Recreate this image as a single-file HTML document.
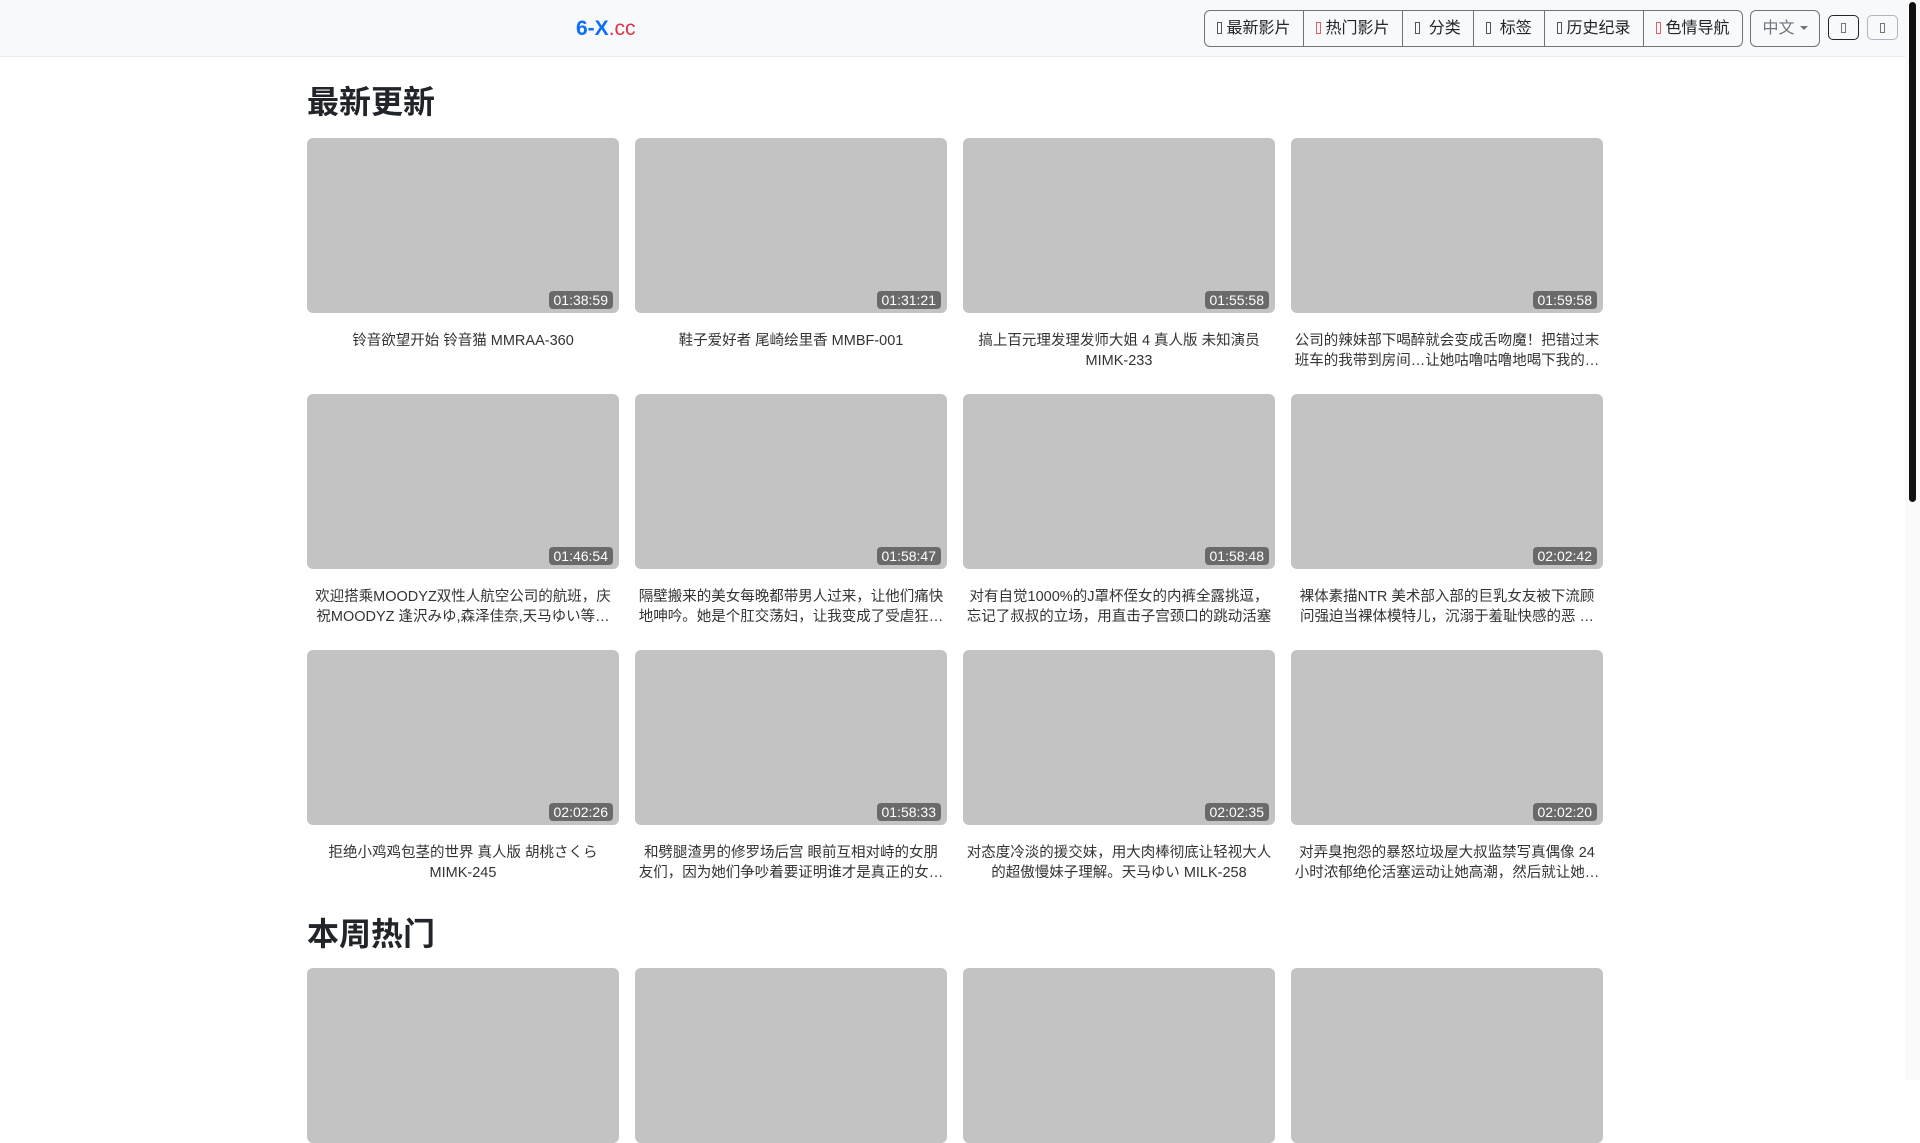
<!DOCTYPE html>
<html><head><meta charset="utf-8"><style>
*{box-sizing:border-box;margin:0;padding:0}
body{width:1920px;height:1080px;overflow:hidden;background:#fff;font-family:"Liberation Sans","Noto Sans CJK SC",sans-serif;color:#212529;position:relative}
.nav{position:absolute;left:0;top:0;width:1905px;height:57px;background:#f8f9fa;border-bottom:1px solid #e9ecef}
.logo{position:absolute;left:576px;top:14px;font-size:21px;line-height:30px}
.logo b{color:#0d6efd}.logo span{color:#dc3545}
.grp{position:absolute;left:1204px;top:10px;height:37px;display:flex;border:1px solid #6c757d;border-radius:6px;overflow:hidden}
.grp div{height:35px;line-height:36px;font-size:16px;color:#212529;border-left:1px solid #6c757d;text-align:center;white-space:nowrap}
.grp div:first-child{border-left:none}
.ic{display:inline-block;width:5px;height:12px;border:1px solid #555;vertical-align:-1px;margin-right:4px}
.ic.r{border-color:#e0606a}
.lang{position:absolute;left:1750px;top:10px;width:70px;height:37px;border:1px solid #6c757d;border-radius:6px;font-size:16px;line-height:36px;color:#6c757d;text-align:center}
.lang:after{content:"";display:inline-block;border-left:4px solid transparent;border-right:4px solid transparent;border-top:4px solid #6c757d;margin-left:5px;vertical-align:3px}
.sb{position:absolute;top:15px;width:31px;height:25px;border:1px solid #212529;border-radius:5px}
.sb i{position:absolute;left:12px;top:7px;width:5px;height:10px;border:1px solid #777}
.sb2{border-color:#adb5bd}
h2{position:absolute;left:307px;font-size:32px;font-weight:bold;line-height:40px;font-family:"Liberation Sans","Noto Sans CJK SC",sans-serif;color:#212529}
.card{position:absolute;width:312px}
.th{height:175px;background:#c3c3c3;border-radius:6px;position:relative}
.du{position:absolute;right:6px;bottom:4px;height:18px;line-height:18px;padding:0 5px;background:#6a6a6a;color:#fff;font-size:14px;border-radius:4px}
.t{margin-top:18px;padding:0 3px;font-size:14.5px;line-height:20px;text-align:center;color:#333;display:-webkit-box;-webkit-line-clamp:2;-webkit-box-orient:vertical;overflow:hidden}
.scroll{position:absolute;right:0;top:0;width:15px;height:1080px;background:#fafafa}
.scroll i{position:absolute;left:4px;top:2px;width:7px;height:500px;background:#111;border-radius:4px}
</style></head><body>
<div class="nav">
<div class="logo"><b>6-X</b><span>.cc</span></div>
<div class="grp">
<div style="width:98px"><span class="ic"></span>最新影片</div>
<div style="width:99px"><span class="ic r"></span>热门影片</div>
<div style="width:71px"><span class="ic"></span> 分类</div>
<div style="width:71px"><span class="ic"></span> 标签</div>
<div style="width:99px"><span class="ic"></span>历史纪录</div>
<div style="width:99px"><span class="ic r"></span>色情导航</div>
</div>
<div class="lang">中文</div>
<div class="sb" style="left:1828px"><i></i></div>
<div class="sb sb2" style="left:1867px"><i></i></div>
</div>
<h2 style="top:82px">最新更新</h2>
<div class="card" style="left:307px;top:138px"><div class="th"><span class="du">01:38:59</span></div><div class="t">铃音欲望开始 铃音猫 MMRAA-360</div></div>
<div class="card" style="left:635px;top:138px"><div class="th"><span class="du">01:31:21</span></div><div class="t">鞋子爱好者 尾崎绘里香 MMBF-001</div></div>
<div class="card" style="left:963px;top:138px"><div class="th"><span class="du">01:55:58</span></div><div class="t">搞上百元理发理发师大姐 4 真人版 未知演员 MIMK-233</div></div>
<div class="card" style="left:1291px;top:138px"><div class="th"><span class="du">01:59:58</span></div><div class="t">公司的辣妹部下喝醉就会变成舌吻魔！把错过末班车的我带到房间…让她咕噜咕噜地喝下我的精液</div></div>
<div class="card" style="left:307px;top:394px"><div class="th"><span class="du">01:46:54</span></div><div class="t">欢迎搭乘MOODYZ双性人航空公司的航班，庆祝MOODYZ 逢沢みゆ,森泽佳奈,天马ゆい等演员出演</div></div>
<div class="card" style="left:635px;top:394px"><div class="th"><span class="du">01:58:47</span></div><div class="t">隔壁搬来的美女每晚都带男人过来，让他们痛快地呻吟。她是个肛交荡妇，让我变成了受虐狂奴隶</div></div>
<div class="card" style="left:963px;top:394px"><div class="th"><span class="du">01:58:48</span></div><div class="t">对有自觉1000%的J罩杯侄女的内裤全露挑逗，忘记了叔叔的立场，用直击子宫颈口的跳动活塞</div></div>
<div class="card" style="left:1291px;top:394px"><div class="th"><span class="du">02:02:42</span></div><div class="t">裸体素描NTR 美术部入部的巨乳女友被下流顾问强迫当裸体模特儿，沉溺于羞耻快感的恶 小铃みかん</div></div>
<div class="card" style="left:307px;top:650px"><div class="th"><span class="du">02:02:26</span></div><div class="t">拒绝小鸡鸡包茎的世界 真人版 胡桃さくら MIMK-245</div></div>
<div class="card" style="left:635px;top:650px"><div class="th"><span class="du">01:58:33</span></div><div class="t">和劈腿渣男的修罗场后宫 眼前互相对峙的女朋友们，因为她们争吵着要证明谁才是真正的女朋友而开始</div></div>
<div class="card" style="left:963px;top:650px"><div class="th"><span class="du">02:02:35</span></div><div class="t">对态度冷淡的援交妹，用大肉棒彻底让轻视大人的超傲慢妹子理解。天马ゆい MILK-258</div></div>
<div class="card" style="left:1291px;top:650px"><div class="th"><span class="du">02:02:20</span></div><div class="t">对弄臭抱怨的暴怒垃圾屋大叔监禁写真偶像 24小时浓郁绝伦活塞运动让她高潮，然后就让她高潮</div></div>
<h2 style="top:914px">本周热门</h2>
<div class="card" style="left:307px;top:968px"><div class="th"></div></div>
<div class="card" style="left:635px;top:968px"><div class="th"></div></div>
<div class="card" style="left:963px;top:968px"><div class="th"></div></div>
<div class="card" style="left:1291px;top:968px"><div class="th"></div></div>
<div class="scroll"><i></i></div>
</body></html>
